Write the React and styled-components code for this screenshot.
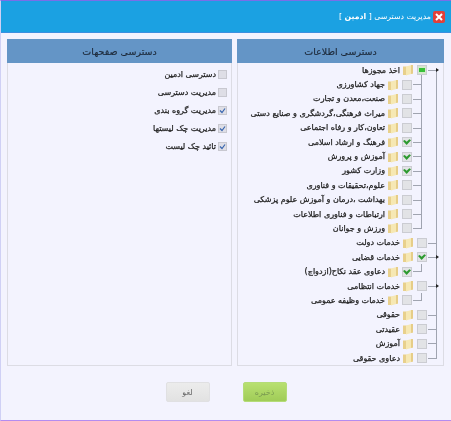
import React from "react";
import styled, { createGlobalStyle } from "styled-components";

const Global = createGlobalStyle`
html,body{margin:0;padding:0;background:#f3f3fe;}
*{box-sizing:border-box;}
`;

const Dialog = styled.div`
width:451px;
height:421px;
display:flex;
flex-direction:column;
direction:rtl;
background:#f3f3fe;
font-family:"DejaVu Sans",sans-serif;
border-top:1px solid #7a6ee8;
border-bottom:1px solid #b48cf0;
border-left:1px solid #cfd0f5;
filter:blur(0.5px);
`;

const TitleBar = styled.div`
height:32px;
flex:none;
display:flex;
align-items:center;
gap:2px;
padding-right:6px;
background:#1ba1e2;
border-bottom:1px solid #3b8fe0;
color:#fff;
font-size:7.8px;
`;

const TitleName = styled.b`
font-weight:700;
`;

const CloseIcon = styled.svg`
width:12px;
height:12px;
flex:none;
`;

const Panels = styled.div`
display:grid;
grid-template-columns:207px 225px;
gap:5px;
padding:6px 7px 0 6px;
height:332px;
flex:none;
`;

const Panel = styled.div`
border:1px solid #dcdce4;
border-top:0;
display:flex;
flex-direction:column;
min-width:0;
`;

const PanelHead = styled.div`
height:24px;
margin:0 -1px;
flex:none;
display:flex;
align-items:center;
justify-content:center;
background:#6495c6;
color:#1d2a3a;
font-size:9.5px;
-webkit-text-stroke:0.15px #1d2a3a;
`;

const Tree = styled.div`
position:relative;
display:flex;
flex-direction:column;
`;

const TreeLine = styled.span`
position:absolute;
top:${p => p.$top}px;
right:${p => p.$right}px;
height:${p => p.$height}px;
width:1px;
background:#a0a4b0;
`;

const Row = styled.div`
position:relative;
height:14.4px;
display:flex;
align-items:center;
padding-right:${p => (p.$level ? 21 : 6) + 10}px;
font-size:8px;
-webkit-text-stroke:0.25px #222;
color:#222;
white-space:nowrap;
`;

const Connector = styled.span`
position:absolute;
top:7px;
right:${p => (p.$level ? 21 : 6)}px;
width:9px;
height:1px;
background:#a0a4b0;
${p => p.$elbow && `
&::after{
content:"";
position:absolute;
right:0;
bottom:0;
width:1px;
height:8px;
background:#a0a4b0;
}
`}
`;

const Arrow = styled.span`
position:absolute;
top:5px;
right:4px;
width:0;
height:0;
border-top:2.5px solid transparent;
border-bottom:2.5px solid transparent;
border-left:3.5px solid #222;
`;

const Box = styled.span`
position:relative;
width:10px;
height:10px;
flex:none;
display:flex;
align-items:center;
justify-content:center;
background:${p => (p.$partial ? "#d4e8cc" : "#e2e3e6")};
border:1px solid #cbccd2;
margin-left:4px;
`;

const Partial = styled.span`
width:6px;
height:4px;
background:#38c038;
`;

const Folder = styled.svg`
width:10px;
height:12px;
flex:none;
margin-left:3px;
`;

const Pages = styled.div`
display:flex;
flex-direction:column;
padding-top:2px;
`;

const PageRow = styled.div`
height:18px;
display:flex;
align-items:center;
gap:2px;
padding-right:4px;
font-size:8px;
-webkit-text-stroke:0.25px #222;
color:#222;
`;

const PageCheck = styled.span`
width:9px;
height:9px;
flex:none;
display:flex;
align-items:center;
justify-content:center;
background:#dedee6;
border:1px solid #c8c8d0;
`;

const Footer = styled.div`
flex:1;
display:flex;
justify-content:center;
align-items:flex-start;
gap:33px;
padding-top:17px;
`;

const Button = styled.button`
width:44px;
height:20px;
padding:0;
font-family:inherit;
font-size:8px;
border-radius:2px;
border:1px solid ${p => (p.$primary ? "#b4dc78" : "#e0e0e2")};
background:${p => (p.$primary ? "linear-gradient(#b8e070,#a0cc58)" : "linear-gradient(#ececec,#e2e2e2)")};
color:${p => (p.$primary ? "#7a9a50" : "#666")};
`;

const treeRows = [
  { label: "اخذ مجوزها", partial: true, arrow: true },
  { label: "جهاد کشاورزی", level: 1 },
  { label: "صنعت،معدن و تجارت", level: 1 },
  { label: "میراث فرهنگی،گردشگری و صنایع دستی", level: 1 },
  { label: "تعاون،کار و رفاه اجتماعی", level: 1 },
  { label: "فرهنگ و ارشاد اسلامی", level: 1, checked: true },
  { label: "آموزش و پرورش", level: 1, checked: true },
  { label: "وزارت کشور", level: 1, checked: true },
  { label: "علوم،تحقیقات و فناوری", level: 1 },
  { label: "بهداشت ،درمان و آموزش علوم پزشکی", level: 1 },
  { label: "ارتباطات و فناوری اطلاعات", level: 1 },
  { label: "ورزش و جوانان", level: 1 },
  { label: "خدمات دولت" },
  { label: "خدمات قضایی", checked: true, arrow: true },
  { label: "دعاوی عقد نکاح(ازدواج)", level: 1, checked: true, elbow: true },
  { label: "خدمات انتظامی", arrow: true },
  { label: "خدمات وظیفه عمومی", level: 1, elbow: true },
  { label: "حقوقی" },
  { label: "عقیدتی" },
  { label: "آموزش" },
  { label: "دعاوی حقوقی" },
];

const pageRows = [
  { label: "دسترسی ادمین" },
  { label: "مدیریت دسترسی" },
  { label: "مدیریت گروه بندی", checked: true },
  { label: "مدیریت چک لیستها", checked: true },
  { label: "تائید چک لیست", checked: true },
];

const FolderIcon = () => (
  <Folder viewBox="0 0 10 12">
    <path d="M0 2.5h3.5v8.5h-3.5z" fill="#e8d08c" />
    <path d="M3 2.5l5.5-1.5h1.5v8.5l-7 2z" fill="#f6e8b4" />
    <path d="M8 1h2v8.5l-2 .5z" fill="#e6cd88" />
  </Folder>
);

const Tick = () => (
  <svg width="12" height="10" viewBox="0 0 12 10">
    <path d="M0 3.5l2.5-1.5 3 2.5 4-3.5 2.5 1.5-6.5 7z" fill="#2c9a30" />
  </svg>
);

const SmallTick = () => (
  <svg width="7" height="7" viewBox="0 0 7 7">
    <path d="M1 3.5l2 2 3-4" fill="none" stroke="#3a66b0" strokeWidth="1.2" />
  </svg>
);

const App = () => {
  return (
    <Dialog>
      <Global />
      <TitleBar>
        <CloseIcon viewBox="0 0 12 12">
          <rect width="12" height="12" rx="2" fill="#e0403a" />
          <path d="M3 3l6 6M9 3l-6 6" stroke="#fff" strokeWidth="2" />
        </CloseIcon>
        <span>
          مدیریت دسترسی [ <TitleName>ادمین</TitleName> ]
        </span>
      </TitleBar>
      <Panels>
        <Panel>
          <PanelHead>دسترسی اطلاعات</PanelHead>
          <Tree>
            <TreeLine $top={7} $right={6} $height={288} />
            <TreeLine $top={7} $right={21} $height={159} />
            {treeRows.map(r => (
              <Row key={r.label} $level={r.level}>
                <Connector $level={r.level} $elbow={r.elbow} />
                {r.arrow && <Arrow />}
                <Box $partial={r.partial}>
                  {r.partial && <Partial />}
                  {r.checked && <Tick />}
                </Box>
                <FolderIcon />
                <span>{r.label}</span>
              </Row>
            ))}
          </Tree>
        </Panel>
        <Panel>
          <PanelHead>دسترسی صفحهات</PanelHead>
          <Pages>
            {pageRows.map(r => (
              <PageRow key={r.label}>
                <PageCheck>{r.checked && <SmallTick />}</PageCheck>
                <span>{r.label}</span>
              </PageRow>
            ))}
          </Pages>
        </Panel>
      </Panels>
      <Footer>
        <Button $primary>ذخیره</Button>
        <Button>لغو</Button>
      </Footer>
    </Dialog>
  );
};

export default App;
